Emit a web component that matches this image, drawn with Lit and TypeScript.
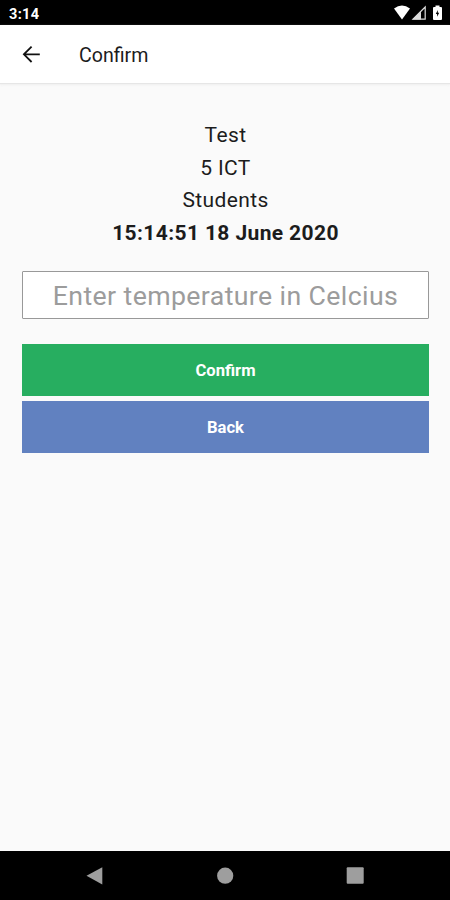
import { LitElement, html, css } from "lit";
import { customElement } from "lit/decorators.js";

@customElement("app-root")
export class AppRoot extends LitElement {
  static styles = css`
    :host {
      display: flex;
      flex-direction: column;
      box-sizing: border-box;
      height: 900px;
      background: #fafafa;
      color: #1c1c1c;
      font-family: Roboto, "Liberation Sans", sans-serif;
      overflow: hidden;
    }
    svg { display: block; }
    .status {
      display: flex;
      flex: none;
      justify-content: space-between;
      height: 25px;
      padding: 0 7px 0 9px;
      background: #000;
      color: #fff;
    }
    .clock {
      font-size: 14.5px;
      font-weight: 700;
      line-height: 29px;
      letter-spacing: 0.35px;
    }
    .bar {
      display: flex;
      flex: none;
      align-items: center;
      height: 58px;
      padding-left: 19px;
      background: #fff;
      box-shadow: 0 1px 1px #e6e6e6, 0 2px 3px #f0f0f0;
    }
    .title {
      margin-left: 36px;
      padding-top: 3px;
      font-size: 19.6px;
      line-height: 24px;
    }
    .content {
      flex: 1;
      padding: 36px 21px 0 22px;
    }
    .info {
      text-align: center;
      font-size: 21px;
      line-height: 32.7px;
      letter-spacing: 0.38px;
    }
    .when { font-weight: 700; }
    .field {
      display: block;
      box-sizing: border-box;
      width: 100%;
      height: 48px;
      margin: 21px 0 25px;
      padding: 2px 0 0;
      border: 1.5px solid #999;
      border-radius: 1px;
      background: #fff;
      color: #1c1c1c;
      font: 400 26.7px/44px Roboto, "Liberation Sans", sans-serif;
      letter-spacing: 0.38px;
      text-align: center;
      outline: none;
    }
    .field::placeholder { color: #9c9c9c; opacity: 1; }
    .btn {
      display: block;
      width: 100%;
      height: 52px;
      padding: 3px 0 0;
      border: 0;
      color: #fff;
      font: 700 16.6px/20px Roboto, "Liberation Sans", sans-serif;
    }
    .confirm { margin-bottom: 5px; background: #27ae60; }
    .back { background: #6181c0; }
    .nav {
      display: flex;
      flex: none;
      justify-content: space-between;
      align-items: center;
      height: 49px;
      padding: 0 85px 0 84px;
      background: #000;
    }
  `;

  render() {
    return html`
      <div class="status">
        <span class="clock">3:14</span>
        <svg width="50" height="25" viewBox="393 0 50 25" fill="#fff">
          <path d="M394 8.5Q402 2.5 410 8.5L402 19.5Z" />
          <path d="M425.2 7V19.2H413Z" fill="none" stroke="#ddd" stroke-width="1.2" />
          <path d="M421 11.5V19.5H412.3Z" fill="#ddd" />
          <path d="M434 7H435.5V5.5H439.5V7H441Q442 7 442 8V19Q442 20 441 20H434Q433 20 433 19V8Q433 7 434 7Z" />
          <path d="M437.8 10L435.8 14H437.1V16.8L439.2 12.8H437.8Z" fill="#000" />
        </svg>
      </div>
      <div class="bar">
        <svg width="24" height="24" viewBox="0 0 24 24" fill="none" stroke="#111" stroke-width="1.8">
          <path d="M20.8 12.3H4.8M12.6 4.6L4.9 12.3L12.6 20" />
        </svg>
        <span class="title">Confirm</span>
      </div>
      <div class="content">
        <div class="info">
          <div>Test</div>
          <div>5 ICT</div>
          <div>Students</div>
          <div class="when">15:14:51 18 June 2020</div>
        </div>
        <input class="field" placeholder="Enter temperature in Celcius" />
        <button class="btn confirm">Confirm</button>
        <button class="btn back">Back</button>
      </div>
      <div class="nav">
        <svg width="20" height="20" viewBox="0 0 20 20"><path d="M2.5 9.7L18.3 1.2V18.4Z" fill="#9e9e9e" /></svg>
        <svg width="20" height="20" viewBox="0 0 20 20"><circle cx="10.2" cy="9.7" r="8.1" fill="#9e9e9e" /></svg>
        <svg width="20" height="20" viewBox="0 0 20 20"><rect x="1.7" y="1.2" width="17" height="16.5" rx="1" fill="#9e9e9e" /></svg>
      </div>
    `;
  }
}
